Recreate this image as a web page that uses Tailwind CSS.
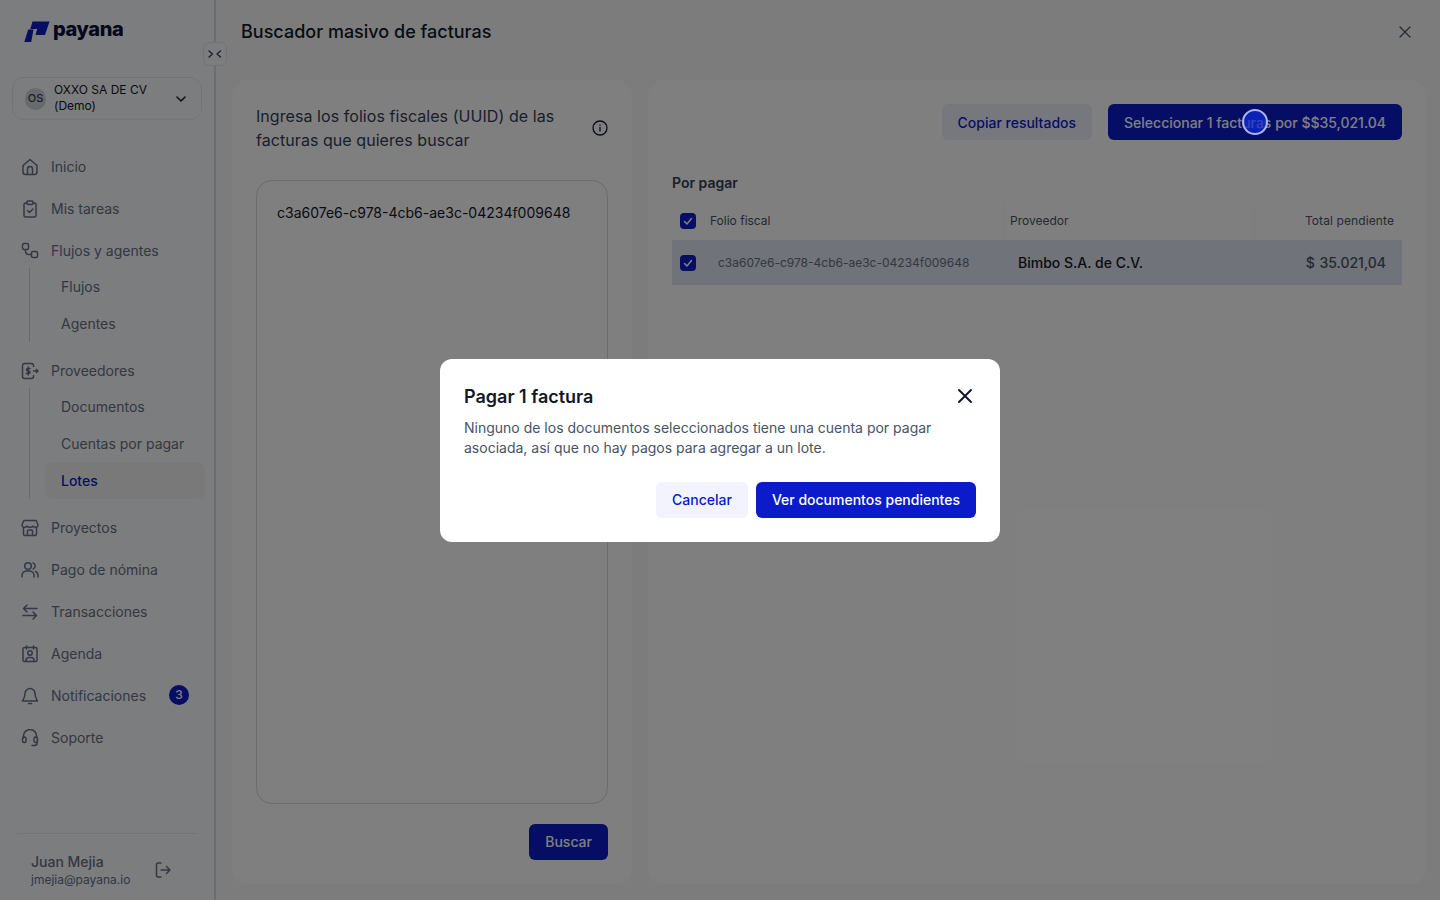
<!DOCTYPE html>
<html lang="es">
<head>
    <meta charset="utf-8">
    <meta name="viewport" content="width=device-width, initial-scale=1.0">
    <title>Buscador masivo de facturas</title>
    <script src="https://cdn.jsdelivr.net/npm/@tailwindcss/browser@4"></script>
</head>
<body class="font-['Inter',sans-serif] bg-[#f8f8f8] text-[#101828]">
<div class="relative flex h-[900px] w-[1440px] overflow-hidden">

    <!-- Sidebar -->
    <aside class="relative flex h-full w-[216px] shrink-0 flex-col border-r-2 border-[#dcdcdc] bg-[#f9fafc]">
        <div class="flex h-[77px] items-start pl-6 pt-[21px]">
            <svg width="26" height="22" viewBox="0 0 26 22">
                <path d="M8.500 .5H25.500L21 14H11.500L13.200 8H6.300Z" fill="#0b1bc9"/>
                <path d="M4.200 8.500H9.500L7.200 21H.3Z" fill="#0b1bc9"/>
            </svg>
            <span class="ml-[3px] -mt-[2px] text-[20px] leading-[20px] font-extrabold tracking-[-0.4px] text-[#0a0f3c]">payana</span>
        </div>

        <div class="absolute left-[203px] top-[42px] flex h-6 w-6 items-center justify-center rounded-md border border-[#e4e7ec] bg-[#f9fafc]">
            <svg width="16" height="12" viewBox="0 0 16 12" fill="none" stroke="#344054" stroke-width="1.400" stroke-linecap="round" stroke-linejoin="round">
                <path d="M2 3l3.500 3L2 9"/>
                <path d="M13.500 3L10 6l3.500 3"/>
            </svg>
        </div>

        <div class="mx-3 flex h-[43px] w-[190px] items-center rounded-xl border border-[#e4e7ec] pl-3 pr-3">
            <div class="flex h-[22px] w-[21px] shrink-0 items-center justify-center rounded-full bg-[#d0d5dd] text-[11px] font-medium text-[#344054]">OS</div>
            <div class="ml-2 flex-1 pb-[2px] text-xs leading-4 text-[#101828]">OXXO SA DE CV (Demo)</div>
            <svg width="16" height="16" viewBox="0 0 24 24" fill="none" stroke="#101828" stroke-width="2.200" stroke-linecap="round" stroke-linejoin="round"><path d="M6 9l6 6 6-6"/></svg>
        </div>

        <nav class="mt-[26px] flex flex-col text-sm text-[#667085]">
            <a class="flex h-[42px] items-center gap-3 pl-[21px]">
                <svg class="shrink-0" width="18" height="18" viewBox="0 0 18 18" fill="none" stroke="#667085" stroke-width="1.500" stroke-linejoin="round"><path d="M2 7.500L9 1.500l7 6V14a2.500 2.500 0 0 1-2.500 2.500h-9A2.500 2.500 0 0 1 2 14z"/><path d="M6.500 16.500V11a2.500 2.500 0 0 1 5 0v5.500"/></svg>
                Inicio
            </a>
            <a class="flex h-[42px] items-center gap-3 pl-[21px]">
                <svg class="shrink-0" width="18" height="18" viewBox="0 0 18 18" fill="none" stroke="#667085" stroke-width="1.500" stroke-linejoin="round" stroke-linecap="round"><path d="M6 3H4.500A1.500 1.500 0 0 0 3 4.500v11A1.500 1.500 0 0 0 4.500 17h9a1.500 1.500 0 0 0 1.500-1.500v-11A1.500 1.500 0 0 0 13.500 3H12"/><rect x="6" y="1" width="6" height="3.500" rx="1"/><path d="M6.500 10.500l2 2 3.500-3.500"/></svg>
                Mis tareas
            </a>
            <a class="flex h-[42px] items-center gap-3 pl-[21px]">
                <svg class="shrink-0" width="18" height="18" viewBox="0 0 18 18" fill="none" stroke="#667085" stroke-width="1.500" stroke-linejoin="round"><rect x="1.500" y="1.500" width="6" height="6" rx="1.500"/><rect x="10.500" y="9.500" width="6" height="6" rx="1.500"/><path d="M4.500 7.500v2a3 3 0 0 0 3 3h3"/></svg>
                Flujos y agentes
            </a>
            <div class="ml-[29px] -mt-1 flex flex-col border-l border-[#d0d5dd]">
                <a class="flex h-[37px] items-center pl-[31px]">Flujos</a>
                <a class="flex h-[37px] items-center pl-[31px]">Agentes</a>
            </div>

            <a class="mt-2 flex h-[42px] items-center gap-3 pl-[21px]">
                <svg class="shrink-0" width="18" height="18" viewBox="0 0 18 18" fill="none" stroke="#667085" stroke-width="1.500" stroke-linejoin="round" stroke-linecap="round"><path d="M12.500 4.500V3.500a2 2 0 0 0-2-2H3.500a2 2 0 0 0-2 2v11a2 2 0 0 0 2 2h7a2 2 0 0 0 2-2v-1"/><path d="M9 6.500H6.800a1.250 1.250 0 0 0 0 2.500h.9a1.250 1.250 0 0 1 0 2.500H5.300M7.200 5v8"/><path d="M12.500 9H17M15.500 7.500L17 9l-1.500 1.500"/></svg>
                Proveedores
            </a>
            <div class="ml-[29px] -mt-1 flex flex-col border-l border-[#d0d5dd]">
                <a class="flex h-[37px] items-center pl-[31px]">Documentos</a>
                <a class="flex h-[37px] items-center pl-[31px]">Cuentas por pagar</a>
                <a class="ml-[15px] mr-[9px] flex h-[37px] items-center rounded-lg bg-[#f2f2f2] pl-[16px] font-medium text-[#0b1bc9]">Lotes</a>
            </div>

            <a class="mt-2 flex h-[42px] items-center gap-3 pl-[21px]">
                <svg class="shrink-0" width="18" height="18" viewBox="0 0 18 18" fill="none" stroke="#667085" stroke-width="1.500" stroke-linejoin="round"><path d="M3.500 1.500h11a1 1 0 0 1 1 .7L17 6a2.200 2.200 0 0 1-2.600 2.200A2.300 2.300 0 0 1 12 7.200 2.900 2.900 0 0 1 9 8.200a2.900 2.900 0 0 1-3-1 2.300 2.300 0 0 1-2.400 1A2.200 2.200 0 0 1 1 6l1.500-3.800a1 1 0 0 1 1-.7z"/><path d="M2.500 8v7a1.500 1.500 0 0 0 1.500 1.500h10a1.500 1.500 0 0 0 1.500-1.500V8"/><path d="M6.500 16.500V12a1 1 0 0 1 1-1h3a1 1 0 0 1 1 1v4.500"/></svg>
                Proyectos
            </a>
            <a class="flex h-[42px] items-center gap-3 pl-[21px]">
                <svg class="shrink-0" width="18" height="18" viewBox="0 0 18 18" fill="none" stroke="#667085" stroke-width="1.500" stroke-linecap="round"><circle cx="7" cy="5" r="3.300"/><path d="M1 16v-1.500A4.500 4.500 0 0 1 5.500 10h3a4.500 4.500 0 0 1 4.500 4.500V16"/><path d="M12 1.900a3.300 3.300 0 0 1 0 6.200M14.500 10.300A4.500 4.500 0 0 1 17 14.500V16"/></svg>
                Pago de nómina
            </a>
            <a class="flex h-[42px] items-center gap-3 pl-[21px]">
                <svg class="shrink-0" width="18" height="18" viewBox="0 0 18 18" fill="none" stroke="#667085" stroke-width="1.500" stroke-linecap="round" stroke-linejoin="round"><path d="M16 5.500H3M6 2L2.500 5.500 6 9"/><path d="M2 12.500h13M12 9l3.500 3.500L12 16"/></svg>
                Transacciones
            </a>
            <a class="flex h-[42px] items-center gap-3 pl-[21px]">
                <svg class="shrink-0" width="18" height="18" viewBox="0 0 18 18" fill="none" stroke="#667085" stroke-width="1.500" stroke-linejoin="round" stroke-linecap="round"><rect x="2" y="2.500" width="14" height="14" rx="1.500"/><path d="M5.500 1v3M12.500 1v3"/><circle cx="9" cy="8" r="2.200"/><path d="M5 16.500v-1a3 3 0 0 1 3-3h2a3 3 0 0 1 3 3v1"/></svg>
                Agenda
            </a>
            <a class="flex h-[42px] items-center gap-3 pl-[21px]">
                <svg class="shrink-0" width="18" height="18" viewBox="0 0 18 18" fill="none" stroke="#667085" stroke-width="1.500" stroke-linejoin="round" stroke-linecap="round"><path d="M9 1.500a5 5 0 0 0-5 5c0 4-1.500 6-2.500 7.500h15C15.500 12.500 14 10.500 14 6.500a5 5 0 0 0-5-5z"/><path d="M7.500 16.500h3"/></svg>
                Notificaciones
                <span class="ml-[11px] -mt-[2px] flex h-5 w-5 items-center justify-center rounded-full bg-[#0b1bc9] text-xs font-medium text-white">3</span>
            </a>
            <a class="flex h-[42px] items-center gap-3 pl-[21px]">
                <svg class="shrink-0" width="18" height="18" viewBox="0 0 18 18" fill="none" stroke="#667085" stroke-width="1.500" stroke-linejoin="round" stroke-linecap="round"><path d="M2.500 9V7a6.500 6.500 0 0 1 13 0v2"/><rect x="1.500" y="8" width="3.500" height="5.500" rx="1.500"/><rect x="13" y="8" width="3.500" height="5.500" rx="1.500"/><path d="M16 13v1a2.500 2.500 0 0 1-2.500 2.500H11"/></svg>
                Soporte
            </a>
        </nav>

        <div class="mx-[17px] mt-auto flex h-[67px] items-center border-t border-[#e4e7ec] pl-[14px] pt-[6px]">
            <div class="w-[123px]">
                <div class="text-sm leading-5 font-medium text-[#667085]">Juan Mejia</div>
                <div class="text-xs leading-4 text-[#667085]">jmejia@payana.io</div>
            </div>
            <svg width="18" height="18" viewBox="0 0 18 18" fill="none" stroke="#667085" stroke-width="1.500" stroke-linecap="round" stroke-linejoin="round"><path d="M7 2H4a1.500 1.500 0 0 0-1.500 1.500v11A1.500 1.500 0 0 0 4 16h3"/><path d="M7 9h9M12.500 5.500L16 9l-3.500 3.500"/></svg>
        </div>
    </aside>

    <!-- Main panel -->
    <main class="flex min-w-0 flex-1 flex-col">
        <header class="flex h-[64px] shrink-0 items-center justify-between pl-[25px] pr-[28px]">
            <h1 class="text-lg font-medium text-[#101828]">Buscador masivo de facturas</h1>
            <svg width="14" height="14" viewBox="0 0 14 14" fill="none" stroke="#475467" stroke-width="1.300" stroke-linecap="round"><path d="M2 2l10 10M12 2L2 12"/></svg>
        </header>

        <div class="flex h-[804px] gap-4 pt-4 pl-4 pr-[14px]">
            <!-- Left card -->
            <section class="flex h-[804px] w-[400px] shrink-0 flex-col rounded-2xl bg-white px-6 pt-6">
                <div class="flex h-[76px] items-start justify-between">
                    <p class="w-[320px] text-base tracking-[0.06px] text-[#344054]">Ingresa los folios fiscales (UUID) de las facturas que quieres buscar</p>
                    <svg class="mt-[16px]" width="16" height="16" viewBox="0 0 16 16" fill="none" stroke="#101828" stroke-width="1.300" stroke-linecap="round"><circle cx="8" cy="8" r="7"/><path d="M8 7.500V11M8 5v.2"/></svg>
                </div>
                <div class="h-[624px] w-[352px] rounded-2xl border border-[#d5d8de] px-5 pt-[23px] text-sm leading-[18px] text-[#101828]">c3a607e6-c978-4cb6-ae3c-04234f009648</div>
                <div class="mt-5 flex justify-end">
                    <button class="h-9 rounded-md bg-[#0b1bc9] px-4 text-sm font-medium text-white">Buscar</button>
                </div>
            </section>

            <!-- Right card -->
            <section class="h-[804px] w-[778px] rounded-2xl bg-white pl-6 pr-6 pt-6">
                <div class="flex justify-end gap-4">
                    <button class="h-9 rounded-md bg-[#eff1fc] px-4 pt-[2px] text-sm font-medium text-[#0b1bc9]">Copiar resultados</button>
                    <button class="h-9 rounded-md bg-[#0b1bc9] px-4 pt-[2px] text-sm font-medium text-white">Seleccionar 1 facturas por $$35,021.04</button>
                </div>
                <h2 class="mt-[34px] text-sm leading-[18px] font-semibold text-[#344054]">Por pagar</h2>
                <div class="mt-[8px] flex h-[40px] items-center pt-[2px] text-xs text-[#475467]">
                    <span class="ml-2 flex h-4 w-4 items-center justify-center rounded-[4px] bg-[#0b1bc9]">
                        <svg width="12" height="12" viewBox="0 0 12 12" fill="none" stroke="#fff" stroke-width="1.500" stroke-linecap="round" stroke-linejoin="round"><path d="M2.500 6.500L5 9l4.500-5.500"/></svg>
                    </span>
                    <span class="ml-[14px] w-[293px]">Folio fiscal</span>
                    <span class="flex h-[34px] w-[251px] items-center border-l border-[#f7f7f8] pl-[6px]">Proveedor</span>
                    <span class="flex h-[34px] flex-1 items-center justify-end border-l border-[#f7f7f8] pr-2 tracking-[0.1px]">Total pendiente</span>
                </div>
                <div class="flex h-[45px] items-center bg-[#e0e6f2]">
                    <span class="ml-2 flex h-4 w-4 items-center justify-center rounded-[4px] bg-[#0b1bc9]">
                        <svg width="12" height="12" viewBox="0 0 12 12" fill="none" stroke="#fff" stroke-width="1.500" stroke-linecap="round" stroke-linejoin="round"><path d="M2.500 6.500L5 9l4.500-5.500"/></svg>
                    </span>
                    <span class="ml-[22px] w-[300px] text-xs text-[#667085]">c3a607e6-c978-4cb6-ae3c-04234f009648</span>
                    <span class="flex-1 text-sm font-medium text-[#101828]">Bimbo S.A. de C.V.</span>
                    <span class="pr-4 text-sm font-medium [word-spacing:1px] text-[#475467]">$ 35.021,04</span>
                </div>
            </section>
        </div>
    </main>

    <!-- Overlay -->
    <div class="absolute inset-0 bg-black/50"></div>

    <!-- Click marker -->
    <div class="absolute left-[1242px] top-[109px] h-[26px] w-[26px] rounded-full border-2 border-[#a9b4ee] bg-[#0f2bd8]/70"></div>

    <!-- Modal -->
    <div class="absolute left-[440px] top-[359px] w-[560px] rounded-xl bg-white p-6">
        <div class="flex items-center justify-between">
            <h3 class="text-lg leading-[28px] font-semibold text-[#101828]">Pagar 1 factura</h3>
            <svg class="mr-[2px] -mt-[2px]" width="18" height="18" viewBox="0 0 18 18" fill="none" stroke="#101828" stroke-width="2" stroke-linecap="round"><path d="M3 3l12 12M15 3L3 15"/></svg>
        </div>
        <p class="mt-[7px] text-sm leading-5 text-[#475467]">Ninguno de los documentos seleccionados tiene una cuenta por pagar asociada, así que no hay pagos para agregar a un lote.</p>
        <div class="mt-6 flex justify-end gap-2">
            <button class="h-9 rounded-md bg-[#f2f3fd] px-4 text-sm font-medium text-[#0b1bc9]">Cancelar</button>
            <button class="h-9 rounded-md bg-[#0b1bc9] px-4 text-sm font-medium text-white">Ver documentos pendientes</button>
        </div>
    </div>
</div>
</body>
</html>
